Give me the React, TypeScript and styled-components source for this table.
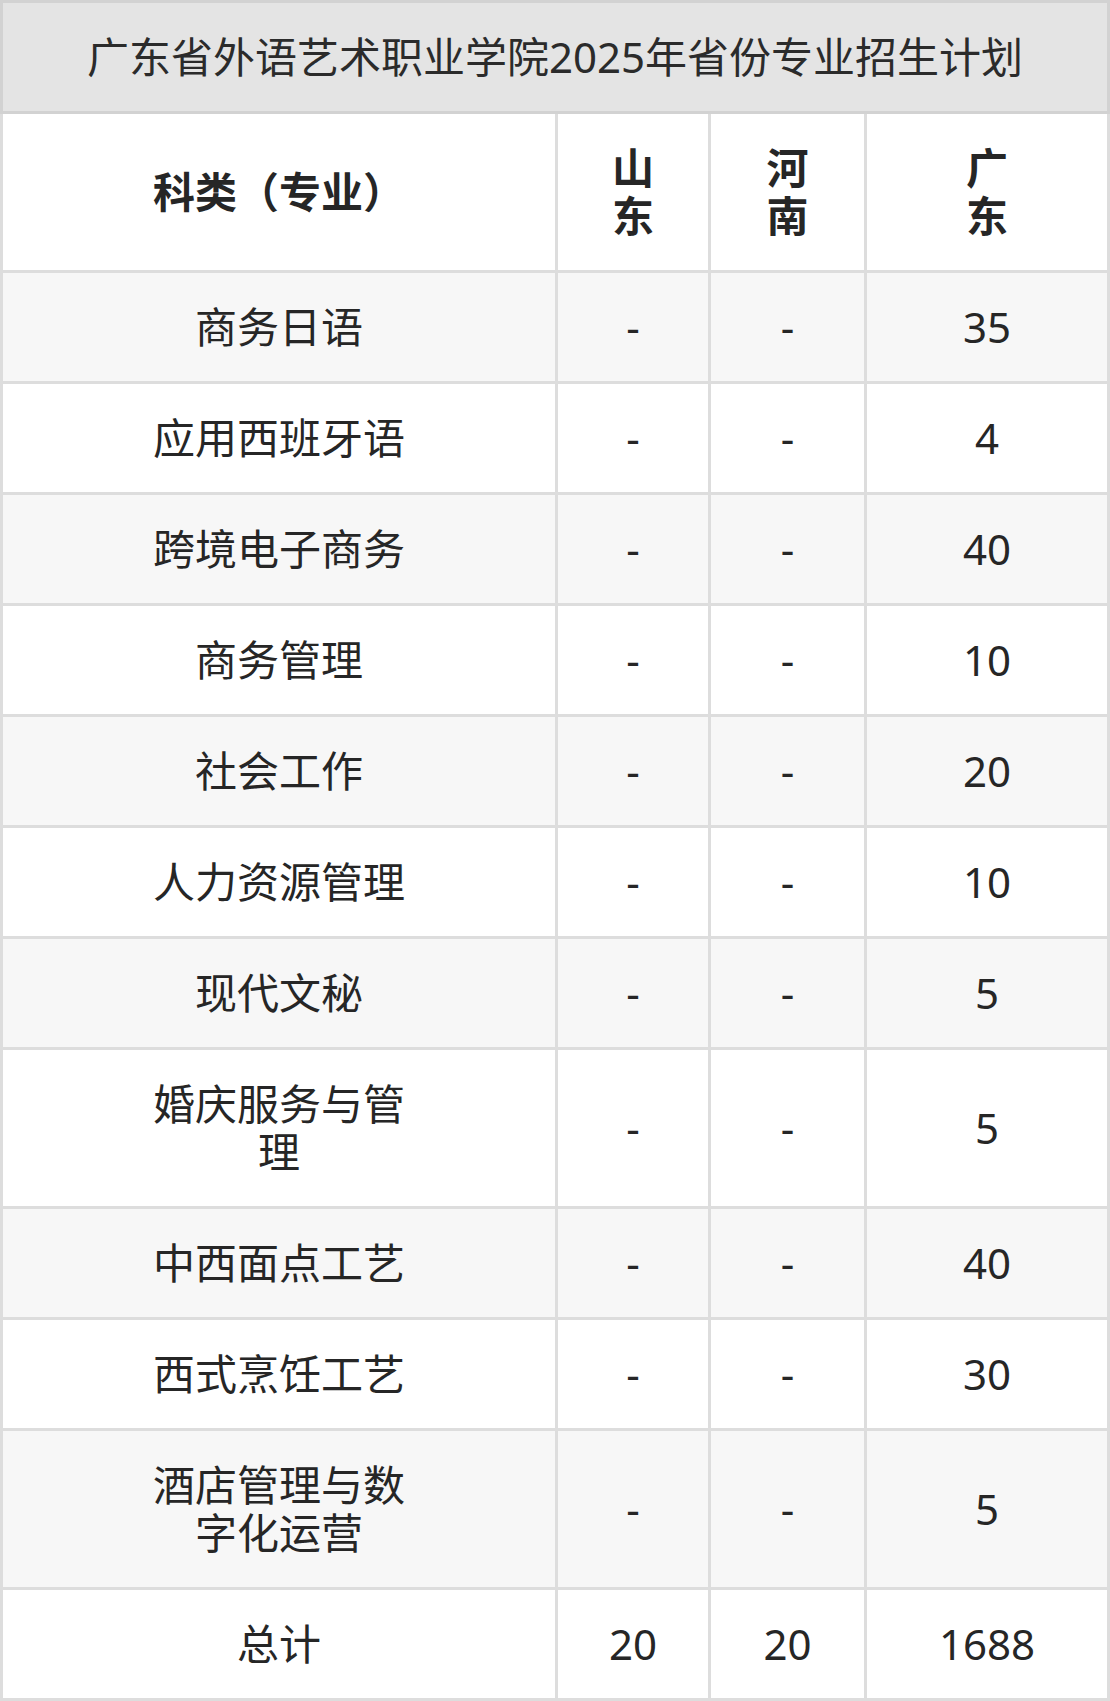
import React from 'react';
import styled, { createGlobalStyle } from 'styled-components';

const GlobalStyle = createGlobalStyle`
  html, body {
    margin: 0;
    padding: 0;
    background: #ffffff;
  }
  body {
    font-family: 'Noto Sans', 'Noto Sans CJK SC', sans-serif;
    color: #262626;
  }
`;

interface RowType {
  name: string;
  shandong: string;
  henan: string;
  guangdong: string;
}

const rows: RowType[] = [
  { name: '商务日语', shandong: '-', henan: '-', guangdong: '35' },
  { name: '应用西班牙语', shandong: '-', henan: '-', guangdong: '4' },
  { name: '跨境电子商务', shandong: '-', henan: '-', guangdong: '40' },
  { name: '商务管理', shandong: '-', henan: '-', guangdong: '10' },
  { name: '社会工作', shandong: '-', henan: '-', guangdong: '20' },
  { name: '人力资源管理', shandong: '-', henan: '-', guangdong: '10' },
  { name: '现代文秘', shandong: '-', henan: '-', guangdong: '5' },
  { name: '婚庆服务与管理', shandong: '-', henan: '-', guangdong: '5' },
  { name: '中西面点工艺', shandong: '-', henan: '-', guangdong: '40' },
  { name: '西式烹饪工艺', shandong: '-', henan: '-', guangdong: '30' },
  { name: '酒店管理与数字化运营', shandong: '-', henan: '-', guangdong: '5' },
];

const total: RowType = { name: '总计', shandong: '20', henan: '20', guangdong: '1688' };

const provinces = ['山东', '河南', '广东'];

const Wrapper = styled.div`
  width: 1110px;
`;

const Title = styled.div`
  border: 3px solid #d2d2d2;
  background: #e4e4e4;
  height: 108px;
  display: flex;
  align-items: center;
  justify-content: center;
  font-size: 42px;
  line-height: 48px;
  color: #2b2b2b;
`;

const Grid = styled.div`
  display: grid;
  grid-template-columns: 552px 150px 153px 240px;
  gap: 3px;
  padding: 0 3px 3px;
  background: #dddddd;
`;

const Cell = styled.div<{ $shade?: boolean; $bold?: boolean }>`
  display: flex;
  align-items: center;
  justify-content: center;
  text-align: center;
  height: 48px;
  min-height: 48px;
  height: auto;
  padding: 30px 0;
  background: ${(p) => (p.$shade ? '#f7f7f7' : '#ffffff')};
  font-size: 42px;
  line-height: 48px;
  font-weight: ${(p) => (p.$bold ? 700 : 400)};
  color: #262626;
`;

const NameLabel = styled.span`
  display: inline-block;
  max-width: 270px;
`;

const ProvinceLabel = styled.span`
  display: inline-block;
  width: 1em;
`;

const App: React.FC = () => {
  return (
    <Wrapper>
      <GlobalStyle />
      <Title>广东省外语艺术职业学院2025年省份专业招生计划</Title>
      <Grid>
        <Cell $bold>
          <NameLabel>科类（专业）</NameLabel>
        </Cell>
        {provinces.map((p) => (
          <Cell $bold key={p}>
            <ProvinceLabel>{p}</ProvinceLabel>
          </Cell>
        ))}
        {rows.map((row, index) => {
          const shade = index % 2 === 0;
          return (
            <React.Fragment key={row.name}>
              <Cell $shade={shade}>
                <NameLabel>{row.name}</NameLabel>
              </Cell>
              <Cell $shade={shade}>{row.shandong}</Cell>
              <Cell $shade={shade}>{row.henan}</Cell>
              <Cell $shade={shade}>{row.guangdong}</Cell>
            </React.Fragment>
          );
        })}
        <Cell>
          <NameLabel>{total.name}</NameLabel>
        </Cell>
        <Cell>{total.shandong}</Cell>
        <Cell>{total.henan}</Cell>
        <Cell>{total.guangdong}</Cell>
      </Grid>
    </Wrapper>
  );
};

export default App;
